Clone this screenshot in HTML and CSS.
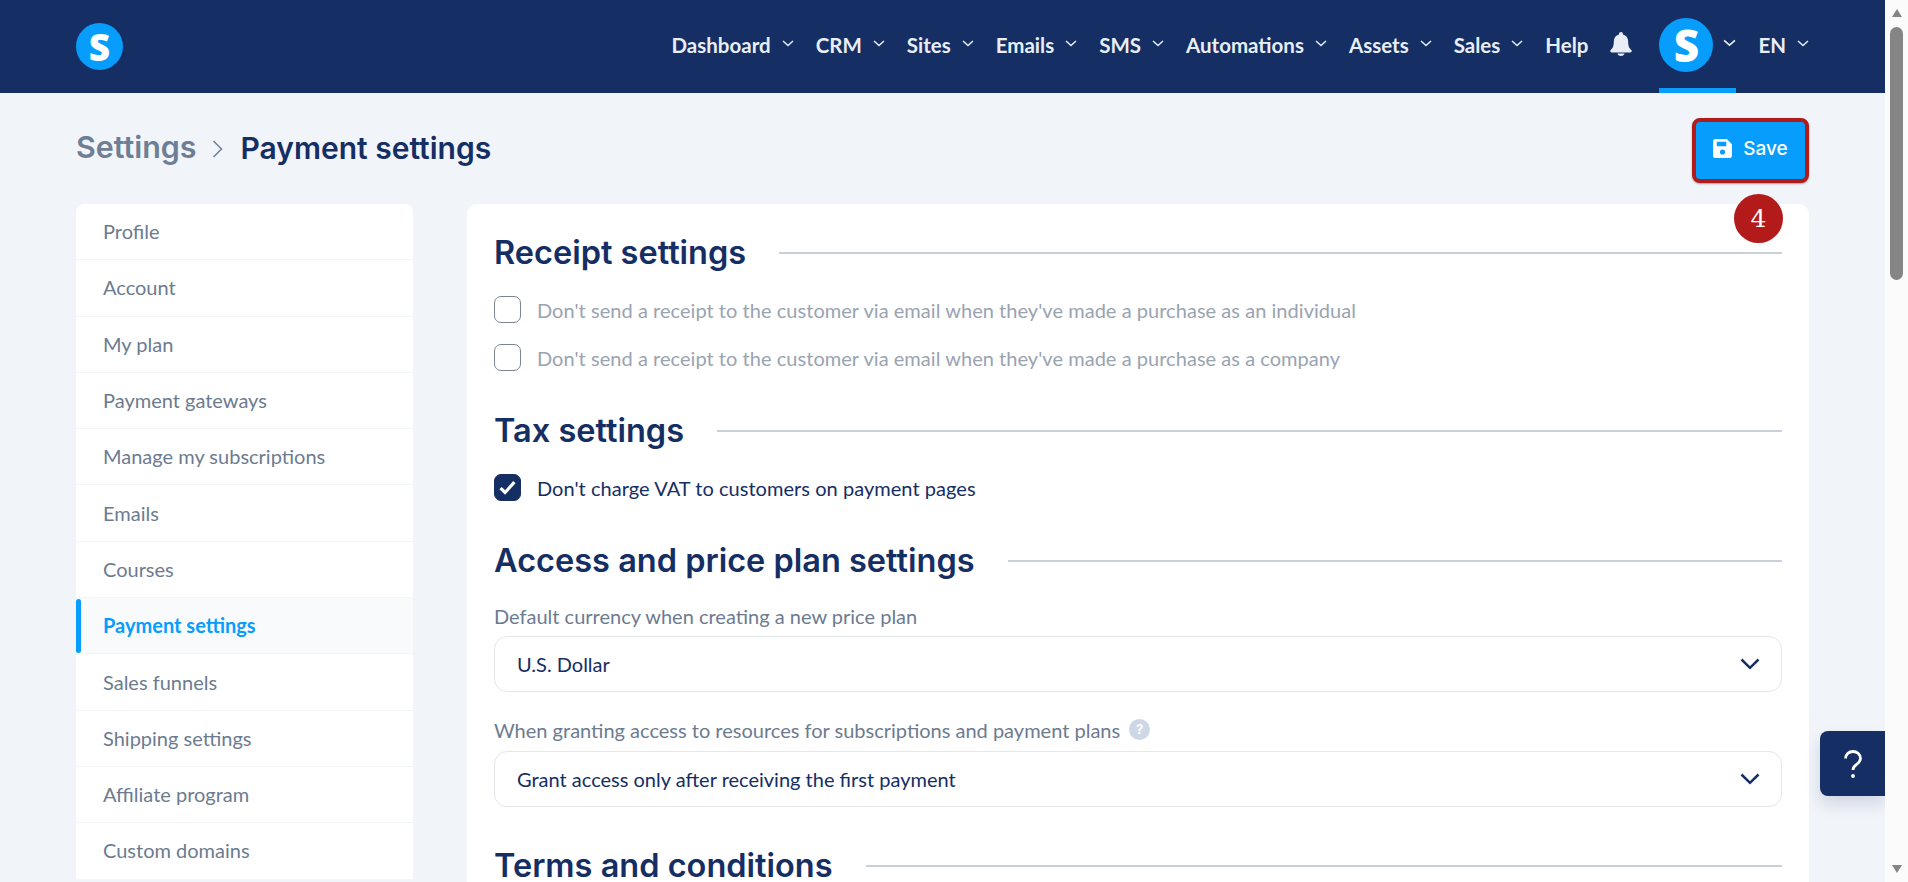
FILE: index.html
```html
<!DOCTYPE html>
<html lang="en">
<head>
<meta charset="utf-8">
<title>Payment settings</title>
<link rel="stylesheet" href="styles.css">
</head>
<body>
<div class="app">
  <div class="page">
    <header class="topbar">
      <a class="logo" href="#"><span>S</span></a>
      <nav class="nav">
        <a class="nav-item">Dashboard<svg class="caret" viewBox="0 0 12 7"><path d="M1 1l5 4.500L11 1"/></svg></a>
        <a class="nav-item">CRM<svg class="caret" viewBox="0 0 12 7"><path d="M1 1l5 4.500L11 1"/></svg></a>
        <a class="nav-item">Sites<svg class="caret" viewBox="0 0 12 7"><path d="M1 1l5 4.500L11 1"/></svg></a>
        <a class="nav-item">Emails<svg class="caret" viewBox="0 0 12 7"><path d="M1 1l5 4.500L11 1"/></svg></a>
        <a class="nav-item">SMS<svg class="caret" viewBox="0 0 12 7"><path d="M1 1l5 4.500L11 1"/></svg></a>
        <a class="nav-item">Automations<svg class="caret" viewBox="0 0 12 7"><path d="M1 1l5 4.500L11 1"/></svg></a>
        <a class="nav-item">Assets<svg class="caret" viewBox="0 0 12 7"><path d="M1 1l5 4.500L11 1"/></svg></a>
        <a class="nav-item">Sales<svg class="caret" viewBox="0 0 12 7"><path d="M1 1l5 4.500L11 1"/></svg></a>
        <a class="nav-item">Help</a>
        <svg class="bell" viewBox="0 0 22 24"><path d="M11 0C9.800 0 9 .9 9 2v.6C5.600 3.500 3.800 6.200 3.800 9.800c0 4.600-1 6.300-3.100 8.300-.9.900-.3 2.400 1 2.400h18.600c1.300 0 1.900-1.500 1-2.400-2.100-2-3.100-3.700-3.100-8.300 0-3.600-1.800-6.300-5.200-7.200V2c0-1.100-.8-2-2-2zM7.500 21.600c.2 1.500 1.600 2.400 3.500 2.400s3.300-.9 3.500-2.400z"/></svg>
        <div class="account">
          <span class="avatar">S</span>
          <svg class="caret" viewBox="0 0 12 7"><path d="M1 1l5 4.500L11 1"/></svg>
        </div>
        <a class="nav-item lang">EN<svg class="caret" viewBox="0 0 12 7"><path d="M1 1l5 4.500L11 1"/></svg></a>
      </nav>
    </header>

    <main class="content">
      <div class="title-row">
        <h1 class="crumbs"><span class="crumb-parent">Settings</span><svg class="crumb-sep" viewBox="0 0 11 18"><path d="M1.500 1L9.500 9l-8 8"/></svg><span>Payment settings</span></h1>
        <button class="save">
          <svg class="save-icon" viewBox="0 0 20 20"><path fill-rule="evenodd" d="M3 0h11.500L20 5.500V17a3 3 0 0 1-3 3H3a3 3 0 0 1-3-3V3a3 3 0 0 1 3-3zm1 3v4.500h10V3zm6 8a2.700 2.700 0 1 0 0 5.400 2.700 2.700 0 0 0 0-5.400z"/></svg>
          Save
        </button>
      </div>

      <div class="columns">
        <aside class="sidebar">
          <a class="side-item">Profile</a>
          <a class="side-item">Account</a>
          <a class="side-item">My plan</a>
          <a class="side-item">Payment gateways</a>
          <a class="side-item">Manage my subscriptions</a>
          <a class="side-item">Emails</a>
          <a class="side-item">Courses</a>
          <a class="side-item active">Payment settings</a>
          <a class="side-item">Sales funnels</a>
          <a class="side-item">Shipping settings</a>
          <a class="side-item">Affiliate program</a>
          <a class="side-item">Custom domains</a>
        </aside>

        <section class="card">
          <span class="step">4</span>
          <h2 class="section-title">Receipt settings</h2>
          <label class="check muted"><span class="box"></span>Don't send a receipt to the customer via email when they've made a purchase as an individual</label>
          <label class="check muted"><span class="box"></span>Don't send a receipt to the customer via email when they've made a purchase as a company</label>

          <h2 class="section-title tax">Tax settings</h2>
          <label class="check"><span class="box on"><svg viewBox="0 0 16 14"><path d="M1.500 7.500l4.200 4.200L14.500 2"/></svg></span>Don't charge VAT to customers on payment pages</label>

          <h2 class="section-title access">Access and price plan settings</h2>
          <div class="field-label">Default currency when creating a new price plan</div>
          <div class="select">U.S. Dollar<svg class="select-caret" viewBox="0 0 20 12"><path d="M1.500 1.500L10 9.800l8.500-8.300"/></svg></div>
          <div class="field-label second">When granting access to resources for subscriptions and payment plans<span class="hint">?</span></div>
          <div class="select">Grant access only after receiving the first payment<svg class="select-caret" viewBox="0 0 20 12"><path d="M1.500 1.500L10 9.800l8.500-8.300"/></svg></div>

          <h2 class="section-title terms">Terms and conditions</h2>
        </section>
      </div>
    </main>

    <button class="help-tab"><svg viewBox="0 0 18 28"><path d="M1.500 8.500C1.500 4.400 4.800 1.500 9 1.500s7.500 2.900 7.500 7c0 3-2 4.500-4 6-1.900 1.400-3.500 2.500-3.500 5.500"/><circle class="dot" cx="9" cy="26" r="1.900"/></svg></button>
  </div>

  <div class="scrollbar">
    <span class="arrow up"></span>
    <span class="thumb"></span>
    <span class="arrow down"></span>
  </div>
</div>
</body>
</html>
```
FILE: styles.css
```css
* { box-sizing: border-box; }
html, body { margin: 0; height: 100%; overflow: hidden; }
body { font-family: "Lato", "Liberation Sans", sans-serif; background: #f1f4f9; color: #152e63; }

.app { display: flex; height: 882px; }
.page { flex: 1; min-width: 0; position: relative; overflow: hidden; }

.topbar { height: 93px; background: #152e63; display: flex; align-items: center; justify-content: space-between; padding: 0 76px; }
.logo { width: 47px; height: 47px; border-radius: 50%; background: #069dfd; color: #fff; text-decoration: none; display: flex; align-items: center; justify-content: center; font: 800 37px/1 "Open Sans", sans-serif; }

.nav { display: flex; align-items: center; height: 93px; color: #e9eef6; }
.nav-item { display: flex; align-items: center; font-size: 20.500px; font-weight: 700; margin-left: 22px; padding-bottom: 4px; white-space: nowrap; }
.nav-item:first-child { margin-left: 0; }
.caret { width: 12px; height: 7px; margin-left: 11px; margin-top: -2px; fill: none; stroke: #e9eef6; stroke-width: 1.500; }

.bell { width: 22px; height: 24px; margin-left: 22px; margin-bottom: 5px; fill: #e9eef6; }
.account { align-self: stretch; display: flex; align-items: center; width: 77px; margin-left: 27px; border-bottom: 5px solid #069dfd; padding-top: 2px; }
.avatar { width: 54px; height: 54px; border-radius: 50%; background: #069dfd; color: #fff; display: flex; align-items: center; justify-content: center; font: 800 44px/1 "Open Sans", sans-serif; flex: none; }
.account .caret { margin-left: 10px; width: 13px; height: 8px; margin-top: -5px; }
.nav-item.lang { margin-left: 22px; }

.content { padding: 0 76px; }
.title-row { height: 111px; display: flex; align-items: center; justify-content: space-between; padding-top: 4px; }
.crumbs { margin: -6px 0 0; font: 600 30px/1 "Inter", sans-serif; display: flex; align-items: center; color: #152e63; }
.crumb-parent { color: #6e7f95; font-size: 30.400px; }
.crumb-sep { width: 11px; height: 18px; margin: 2px 18px 0 15px; fill: none; stroke: #6e7f95; stroke-width: 1.500; }

.save { width: 117px; height: 65px; border: 4px solid #b31b1b; border-radius: 8px; background: #069dfd; color: #fff; display: flex; align-items: center; justify-content: center; gap: 11px; font: 500 19px/1 "Inter", sans-serif; box-shadow: 0 1px 2px rgba(0,0,0,.35); margin-top: -1px; padding: 0 0 3px; }
.save-icon { width: 19px; height: 19px; fill: #fff; }

.columns { display: flex; gap: 54px; align-items: flex-start; }
.sidebar { width: 337px; flex: none; background: #fff; border-radius: 8px 8px 0 0; }
.side-item { display: flex; align-items: center; height: 56.300px; padding: 0 0 1px 27px; font-size: 20px; color: #6c7b90; border-bottom: 1px solid #f3f5f8; position: relative; }
.side-item.active { color: #069dfd; font-weight: 700; background: #f9fafc; }
.side-item.active::before { content: ""; position: absolute; left: 0; top: 1px; bottom: 0; width: 5px; background: #069dfd; border-radius: 3px; }

.card { flex: 1; position: relative; background: #fff; border-radius: 10px 10px 0 0; padding: 33px 27px 0; height: 678px; }
.step { position: absolute; top: -10px; right: 26px; width: 49px; height: 49px; border-radius: 50%; background: #b31b1b; color: #fff; display: flex; align-items: center; justify-content: center; font: 400 25px/1 "DejaVu Serif", serif; }

.section-title { display: flex; align-items: center; gap: 33px; margin: 0; height: 32px; font: 600 32.500px/32px "Inter", sans-serif; color: #152e63; white-space: nowrap; }
.section-title::after { content: ""; flex: 1; height: 2px; background: #c9d0da; }
.section-title.tax { margin-top: 44px; }
.section-title.access { margin-top: 44px; }
.section-title.terms { margin-top: 43px; }

.check { display: flex; align-items: center; gap: 16px; height: 27px; font-size: 20px; letter-spacing: .04px; color: #152e63; margin-top: 21px; }
.section-title + .check { margin-top: 27px; }
.check.muted { color: #9aa3b1; }
.check.muted + .check.muted { margin-top: 21px; }
.box { width: 27px; height: 27px; flex: none; border: 1px solid #7d8591; border-radius: 7px; display: flex; align-items: center; justify-content: center; }
.box.on { background: #152e63; border-color: #152e63; }
.box svg { width: 17px; height: 15px; fill: none; stroke: #fff; stroke-width: 3; }

.field-label { height: 27px; display: flex; align-items: center; font-size: 20px; color: #6c7b90; margin-top: 25px; }
.field-label.second { margin-top: 25px; padding-bottom: 2px; }
.hint { width: 21px; height: 21px; border-radius: 50%; background: #cdd7e6; color: #fff; margin-left: 9px; display: flex; align-items: center; justify-content: center; font: 700 13px/1 "Inter", sans-serif; }
.select { height: 56px; margin-top: 7px; border: 1px solid #e3e6ea; border-radius: 13px; padding: 0 21px 0 22px; display: flex; align-items: center; justify-content: space-between; font-size: 20px; color: #152e63; }
.select-caret { width: 20px; height: 12px; fill: none; stroke: #152e63; stroke-width: 2.500; }

.help-tab { position: absolute; right: 0; top: 731px; width: 65px; height: 65px; border: 0; border-radius: 8px 0 0 8px; background: #152e63; box-shadow: 0 8px 16px rgba(21,46,99,.15); display: flex; align-items: center; justify-content: center; padding: 0; }
.help-tab svg { width: 18px; height: 28px; fill: none; stroke: #fff; stroke-width: 2.800; }
.help-tab .dot { fill: #fff; stroke: none; }

.scrollbar { width: 23px; flex: none; background: #fbfbfb; display: flex; flex-direction: column; align-items: center; padding: 9px 0; }
.arrow { width: 0; height: 0; border-left: 5.500px solid transparent; border-right: 5.500px solid transparent; flex: none; }
.arrow.up { border-bottom: 8px solid #858585; }
.arrow.down { border-top: 8px solid #858585; margin-top: auto; }
.thumb { width: 13px; height: 253px; margin-top: 10px; background: #858585; border-radius: 7px; }
```
